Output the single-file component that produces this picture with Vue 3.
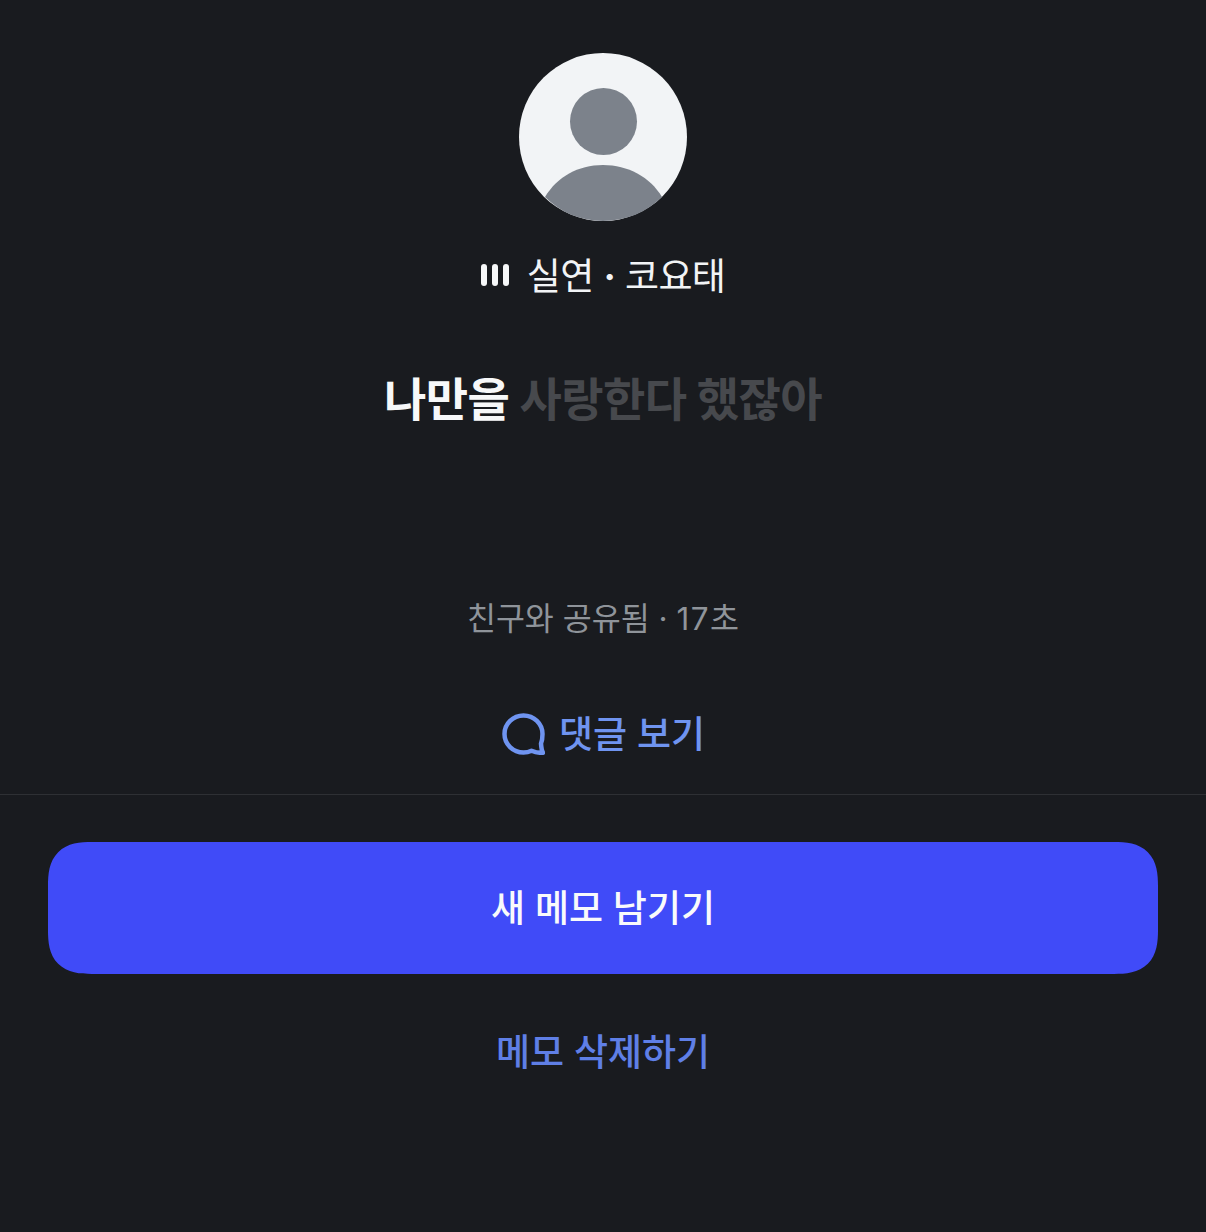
<template>
  <div class="memo-page">
    <section class="memo-body">
      <div class="avatar">
        <svg viewBox="0 0 168 168" width="168" height="168" aria-hidden="true">
          <circle cx="84" cy="84" r="84" fill="#f2f4f6" />
          <circle cx="84.500" cy="68.500" r="33.500" fill="#7c828b" />
          <path d="M26 144 C38 124 59 112 84 112 C109 112 131 124 143 144 C128 159 107 168 84 168 C61 168 41 159 26 144 Z" fill="#7c828b" />
        </svg>
      </div>

      <div class="song">
        <span class="bars"><i></i><i></i><i></i></span>
        <span class="song-name">실연 <b>·</b> 코요태</span>
      </div>

      <p class="lyric">
        <span class="sung">나만을</span> <span class="unsung">사랑한다 했잖아</span>
      </p>

      <p class="meta">친구와 공유됨 · <span class="num">17</span>초</p>

      <button class="comments">
        <svg viewBox="0 0 44 44" width="44" height="44" aria-hidden="true">
          <path d="M22.500 4.500 C12 4.500 3.500 12.800 3.500 23 C3.500 33.200 12 41.500 22.500 41.500 C25.500 41.500 28.200 40.800 30.500 39.700 C33.500 41 38 42 42 41.800 C40.500 39.500 40.300 36.500 40 32.500 C41 30 41.500 26.500 41.500 23 C41.500 12.800 33 4.500 22.500 4.500 Z" fill="none" stroke="#6f94f0" stroke-width="4.500" stroke-linejoin="round" />
        </svg>
        <span>댓글 보기</span>
      </button>
    </section>

    <footer class="actions">
      <button class="primary">새 메모 남기기</button>
      <button class="danger">메모 삭제하기</button>
    </footer>
  </div>
</template>

<script setup>
</script>

<style>
  body {
    background: #191b1f;
  }
</style>

<style scoped>
  .memo-page {
    width: 1206px;
    height: 1232px;
    background: #191b1f;
    font-family: 'Inter', 'Noto Sans CJK KR', sans-serif;
    overflow: hidden;
  }

  button {
    border: 0;
    background: none;
    padding: 0;
    font-family: inherit;
    cursor: pointer;
  }

  .memo-body {
    display: flex;
    flex-direction: column;
    align-items: center;
    height: 795px;
    padding-top: 53px;
    box-sizing: border-box;
    border-bottom: 1px solid #2e3034;
  }

  .avatar {
    width: 168px;
    height: 168px;
  }
  .avatar svg {
    display: block;
  }

  /* Song */
  .song {
    display: flex;
    align-items: center;
    gap: 18px;
    margin-top: 28px;
    height: 50px;
    color: #f2f4f6;
    font-size: 37px;
    letter-spacing: -0.600px;
  }
  .song b {
    font-weight: 700;
  }
  .bars {
    display: flex;
    gap: 5px;
    margin-top: 2px;
  }
  .bars i {
    display: block;
    width: 6px;
    height: 22px;
    border-radius: 3px;
    background: #f7f8f9;
  }

  /* Lyric */
  .lyric {
    margin: 70px 0 0;
    height: 60px;
    line-height: 60px;
    font-size: 46px;
    font-weight: 700;
    letter-spacing: -0.600px;
    white-space: pre;
  }
  .sung { color: #f7f8f9; }
  .unsung { color: #47494d; }

  .meta {
    margin: 170px 0 0;
    height: 40px;
    line-height: 40px;
    font-size: 31.500px;
    color: #8f949a;
  }
  .num {
    letter-spacing: 1.500px;
  }

  .comments {
    display: flex;
    align-items: center;
    gap: 14px;
    margin-top: 68px;
    height: 50px;
    color: #6f94f0;
    font-size: 37px;
    font-weight: 500;
  }
  .comments svg {
    margin-top: 2px;
  }

  /* Bottom actions */
  .actions {
    display: flex;
    flex-direction: column;
    align-items: center;
    padding: 47px 48px 0;
  }
  .primary {
    width: 100%;
    height: 132px;
    padding-bottom: 4px;
    border-radius: 44px;
    corner-shape: superellipse(1.4);
    background: #404bf8;
    color: #f9fafb;
    font-size: 37px;
    font-weight: 500;
  }
  .danger {
    margin-top: 49px;
    height: 50px;
    color: #5f7fe6;
    font-size: 37px;
    font-weight: 500;
  }
</style>
